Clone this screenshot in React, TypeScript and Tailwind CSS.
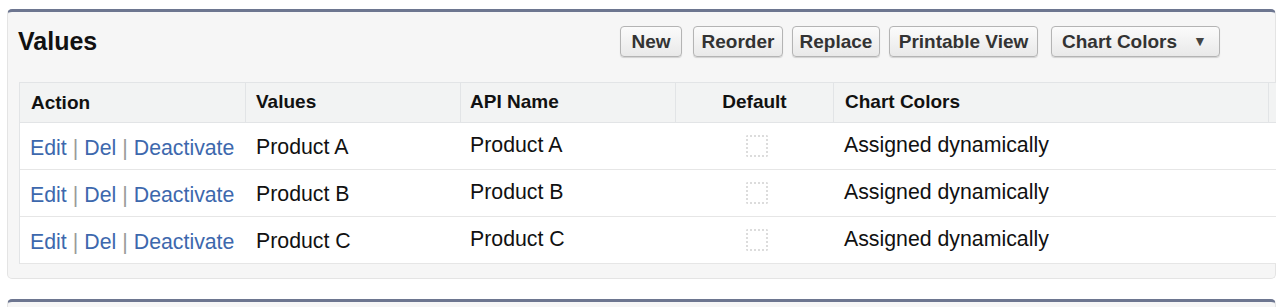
import React from "react";

const rows = ["Product A", "Product B", "Product C"];

function Btn({ children, w }: { children: React.ReactNode; w: string }) {
  return (
    <button
      className={`h-[31px] ${w} rounded-[4px] border border-[#b4b4b4] bg-gradient-to-b from-[#fbfbfb] to-[#e9e9e9] text-[19px] font-bold text-[#333] shadow-[0_1px_1px_rgba(0,0,0,0.15)] flex items-center justify-center leading-none`}
    >
      {children}
    </button>
  );
}

export default function App() {
  return (
    <div
      className="w-[1280px] h-[307px] bg-white pl-[7px] pt-[9px] overflow-hidden"
      style={{ fontFamily: "Arial, 'Liberation Sans', Helvetica, sans-serif" }}
    >
      <div className="w-[1269px] rounded-[5px] border border-[#e4e4e4] border-t-[3px] border-t-[#6d7690] bg-[#f6f6f6] pb-[14px]">
        <div className="flex items-center h-[70px] pl-[10px] pb-[12px]">
          <h2 className="text-[25px] font-bold text-[#111] leading-none">Values</h2>
          <div className="ml-auto mr-[55px] flex items-center">
            <Btn w="w-[62px]">New</Btn>
            <div className="w-[11px]" />
            <Btn w="w-[90px]">Reorder</Btn>
            <div className="w-[9px]" />
            <Btn w="w-[88px]">Replace</Btn>
            <div className="w-[9px]" />
            <Btn w="w-[149px]">Printable View</Btn>
            <div className="w-[13px]" />
            <button className="h-[31px] w-[169px] rounded-[4px] border border-[#b4b4b4] bg-gradient-to-b from-[#fbfbfb] to-[#e9e9e9] text-[19px] font-bold text-[#333] shadow-[0_1px_1px_rgba(0,0,0,0.15)] flex items-center pl-[10px] leading-none">
              <span>Chart Colors</span>
              <span className="ml-[16px] text-[14px] text-[#444]">▼</span>
            </button>
          </div>
        </div>
        <div className="ml-[11px] w-[1257px] border-l border-t border-[#e2e4e6] bg-white">
          <div className="flex h-[40px] bg-[#f2f3f3] border-b border-[#e2e4e6] text-[19px] font-bold text-[#111]">
            <div className="w-[226px] border-r border-[#e2e4e6] pl-[11px] flex items-center pt-[2px]">Action</div>
            <div className="w-[215px] border-r border-[#e2e4e6] pl-[10px] flex items-center">Values</div>
            <div className="w-[215px] border-r border-[#e2e4e6] pl-[9px] flex items-center">API Name</div>
            <div className="w-[158px] border-r border-[#e2e4e6] flex items-center justify-center">Default</div>
            <div className="w-[435px] border-r border-[#e2e4e6] pl-[11px] flex items-center">Chart Colors</div>
            <div className="flex-1" />
          </div>
          {rows.map((r) => (
            <div key={r} className="flex h-[47px] border-b border-[#e6e6e6] text-[21.3px] text-[#111]">
              <div className="w-[226px] pl-[10px] flex items-center pt-[5px] whitespace-nowrap">
                <a className="text-[#3d68ad]">Edit</a>
                <span className="text-[#9a9a9a] px-[6px]">|</span>
                <a className="text-[#3d68ad]">Del</a>
                <span className="text-[#9a9a9a] px-[6px]">|</span>
                <a className="text-[#3d68ad]">Deactivate</a>
              </div>
              <div className="w-[215px] pl-[10px] flex items-center pt-[3px]">{r}</div>
              <div className="w-[215px] pl-[9px] flex items-center pb-[1px]">{r}</div>
              <div className="w-[158px] flex items-center justify-center">
                <div className="w-[22px] h-[22px] border-2 border-dotted border-[#dcdcdc] rounded-[2px] ml-[4px]" />
              </div>
              <div className="flex-1 pl-[10px] flex items-center pb-[1px]">Assigned dynamically</div>
            </div>
          ))}
        </div>
      </div>
      <div className="mt-[20px] w-[1269px] h-[20px] rounded-t-[5px] border-t-[3px] border-[#6d7690] border-x border-x-[#e4e4e4] bg-[#f6f6f6]" />
    </div>
  );
}
